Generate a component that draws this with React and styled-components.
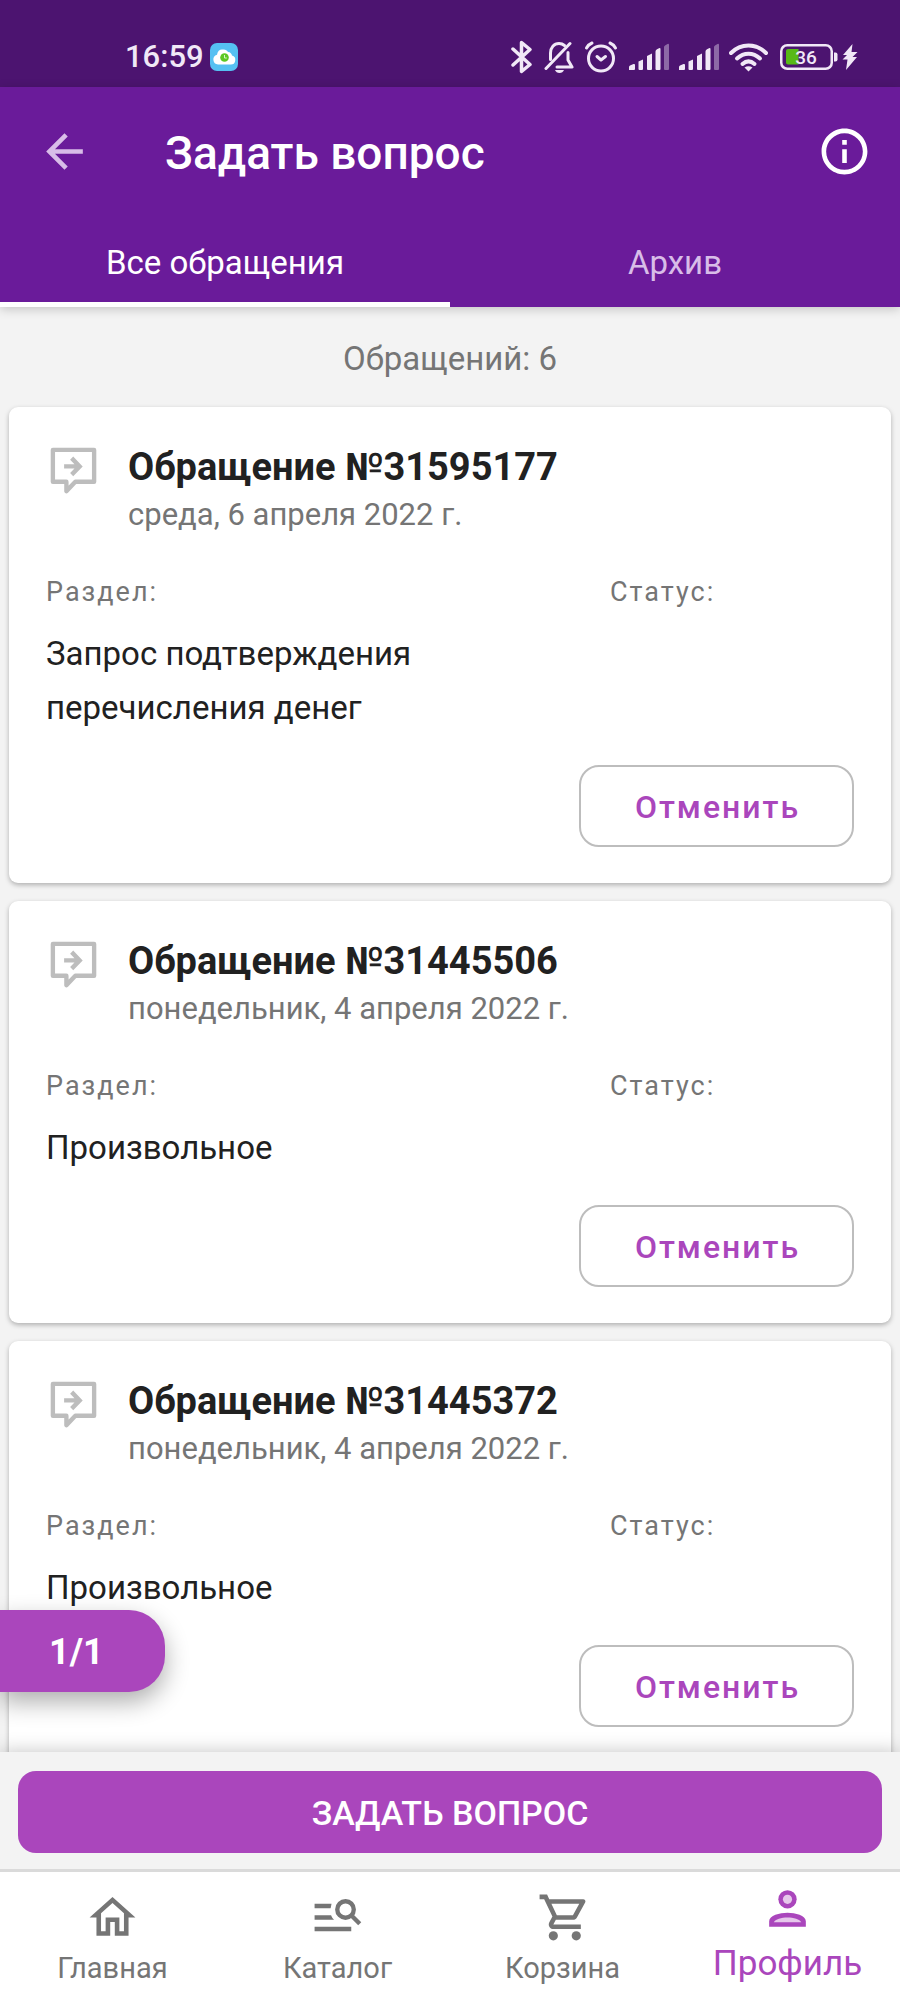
import React, { useState } from "react";
import styled, { createGlobalStyle } from "styled-components";

const GlobalStyle = createGlobalStyle`
  * {
    box-sizing: border-box;
  }
  body {
    margin: 0;
    background: #f3f3f3;
    font-family: Roboto, "Open Sans", sans-serif;
  }
  button {
    font-family: inherit;
    cursor: pointer;
  }
`;

const Screen = styled.div`
  display: flex;
  flex-direction: column;
  height: 100vh;
`;

const StatusBar = styled.div`
  display: flex;
  align-items: center;
  justify-content: space-between;
  flex-shrink: 0;
  height: 87px;
  padding: 26px 42px 0 125px;
  background: #4c1470;
  color: #f1e8f7;
`;
const Clock = styled.div`
  display: flex;
  align-items: center;
  gap: 6px;
  font-size: 31px;
  line-height: 36px;
  font-weight: 500;
`;
const StatusIcons = styled.div`
  display: flex;
  align-items: center;
  gap: 10px;
`;
const BatteryGroup = styled.div`
  display: flex;
  align-items: center;
  gap: 4px;
`;

const Header = styled.header`
  position: relative;
  z-index: 1;
  flex-shrink: 0;
  background: #6a1b9a;
  box-shadow: 0 2px 10px rgba(0, 0, 0, 0.2);
`;
const TitleRow = styled.div`
  display: flex;
  align-items: center;
  height: 128px;
  padding: 0 28px 0 37px;
`;
const IconButton = styled.button`
  display: flex;
  padding: 0;
  border: none;
  background: none;
  color: ${(props) => (props.$dim ? "#d8bde8" : "#fff")};
`;
const Title = styled.h1`
  flex: 1;
  margin: 0;
  padding: 4px 0 0 73px;
  color: #fff;
  font-size: 46px;
  line-height: 54px;
  font-weight: 500;
`;
const Tabs = styled.div`
  display: flex;
  padding-top: 8px;
`;
const Tab = styled.button`
  flex: 1;
  height: 84px;
  padding: 0;
  border: none;
  border-bottom: 5px solid ${(props) => (props.$active ? "#fff" : "transparent")};
  background: none;
  color: ${(props) => (props.$active ? "#fff" : "#d8bde8")};
  font-size: 33px;
  line-height: 44px;
`;

const Content = styled.div`
  position: relative;
  flex: 1;
  min-height: 0;
`;
const List = styled.main`
  display: flex;
  flex-direction: column;
  gap: 18px;
  height: 100%;
  padding: 0 9px 18px;
  overflow-y: auto;
  scrollbar-width: none;
`;
const Count = styled.div`
  padding: 30px 0 8px;
  color: #757575;
  font-size: 33px;
  line-height: 44px;
  text-align: center;
`;
const Card = styled.article`
  flex-shrink: 0;
  padding: 36px 37px;
  border-radius: 9px;
  background: #fff;
  box-shadow: 0 2px 5px rgba(0, 0, 0, 0.28);
`;
const CardHead = styled.div`
  display: flex;
  gap: 27px;
  color: #bdbdbd;
`;
const CardTitle = styled.h2`
  margin: 0;
  color: #212121;
  font-size: 38px;
  line-height: 48px;
  font-weight: 700;
`;
const CardDate = styled.div`
  color: #757575;
  font-size: 31px;
  line-height: 48px;
`;
const Fields = styled.dl`
  display: grid;
  grid-template-columns: 1fr 244px;
  margin: 30px 0;
`;
const Label = styled.dt`
  margin-bottom: 12px;
  color: #757575;
  font-size: 27px;
  line-height: 46px;
  letter-spacing: 2px;
`;
const Value = styled.dd`
  margin: 0;
  color: #212121;
  font-size: 33px;
  line-height: 54px;
`;
const CardActions = styled.div`
  display: flex;
  justify-content: flex-end;
`;
const CancelButton = styled.button`
  min-width: 275px;
  height: 82px;
  padding: 2px 0 0 2px;
  border: 2px solid #bdbdbd;
  border-radius: 20px;
  background: #fff;
  color: #aa46bc;
  font-size: 32px;
  line-height: 44px;
  font-weight: 500;
  letter-spacing: 2px;
`;

const Pager = styled.div`
  position: absolute;
  left: 0;
  bottom: 60px;
  padding: 15px 61px 13px 49px;
  border-radius: 0 36px 36px 0;
  background: #aa46bc;
  box-shadow: 0 10px 24px rgba(0, 0, 0, 0.32);
  color: #fff;
  font-size: 36px;
  line-height: 54px;
  font-weight: 700;
`;

const AskBar = styled.div`
  position: relative;
  flex-shrink: 0;
  padding: 19px 18px 16px;
  border-bottom: 3px solid #dadada;
  background: #f3f3f3;
  box-shadow: 0 0 18px rgba(0, 0, 0, 0.24);
`;
const AskButton = styled.button`
  width: 100%;
  height: 82px;
  padding: 2px 0 0;
  border: none;
  border-radius: 18px;
  background: #aa46bc;
  color: #fff;
  font-size: 34px;
  line-height: 44px;
  font-weight: 500;
`;

const BottomNav = styled.nav`
  position: relative;
  display: flex;
  flex-shrink: 0;
  height: 128px;
  background: #fff;
`;
const NavLink = styled.a`
  display: flex;
  flex: 1;
  flex-direction: column;
  align-items: center;
  padding-top: ${(props) => (props.$active ? "9px" : "18px")};
  color: ${(props) => (props.$active ? "#aa46bc" : "#757575")};
  font-size: ${(props) => (props.$active ? "35px" : "29px")};
  line-height: ${(props) => (props.$active ? "56px" : "46px")};
  text-decoration: none;
`;

const Icon = ({ children }) => (
  <svg width="55" height="55" viewBox="0 0 24 24" fill="currentColor" aria-hidden="true">
    {children}
  </svg>
);

const BackIcon = () => (
  <Icon>
    <path d="M20 11H7.83l5.59-5.59L12 4l-8 8 8 8 1.41-1.41L7.83 13H20v-2z" />
  </Icon>
);

const InfoIcon = () => (
  <Icon>
    <path d="M11 7h2v2h-2zm0 4h2v6h-2zm1-9C6.48 2 2 6.48 2 12s4.48 10 10 10 10-4.48 10-10S17.52 2 12 2zm0 18c-4.41 0-8-3.59-8-8s3.59-8 8-8 8 3.59 8 8-3.59 8-8 8z" />
  </Icon>
);

const MessageIcon = () => (
  <Icon>
    <g fill="none" stroke="currentColor" strokeWidth="1.9">
      <path d="M3 3h18v13.9h-8.2L8.9 21v-4.1H3z" strokeLinejoin="round" />
      <path d="M7.9 10.2h6.6M11.2 6.6l3.5 3.6-3.5 3.6" />
    </g>
  </Icon>
);

const HomeIcon = () => (
  <Icon>
    <path d="M12 5.69l5 4.5V18h-2v-6H9v6H7v-7.81l5-4.5M12 3L2 12h3v8h6v-6h2v6h6v-8h3L12 3z" />
  </Icon>
);

const CatalogIcon = () => (
  <Icon>
    <path d="M2 6h7.4l-.4 2H2zM2 11h7.2c.3.8.7 1.4 1.3 2H2zM2 16h16v2H2z" />
    <circle cx="15.5" cy="8.5" r="3.6" fill="none" stroke="currentColor" strokeWidth="1.9" />
    <path d="M18.2 11.2l3.5 3.5" stroke="currentColor" strokeWidth="1.9" />
  </Icon>
);

const CartIcon = () => (
  <Icon>
    <g transform="translate(1 0)">
      <path d="M15.55 13c.75 0 1.41-.41 1.75-1.03l3.58-6.49A.996.996 0 0 0 20.01 4H5.21l-.94-2H1v2h2l3.6 7.59-1.35 2.44C4.52 15.37 5.48 17 7 17h12v-2H7l1.1-2h7.45zM6.16 6h12.15l-2.76 5H8.53L6.16 6z" />
      <circle cx="7" cy="20" r="2" />
      <circle cx="17" cy="20" r="2" />
    </g>
  </Icon>
);

const ProfileIcon = () => (
  <Icon>
    <circle cx="12" cy="8" r="4" />
    <circle cx="12" cy="8" r="2" fill="#e6c8eb" />
    <path d="M12 13.9c-3.4 0-8 1.2-8 3.7V20h16v-2.4c0-2.5-4.6-3.7-8-3.7z" />
    <path d="M12 15.9c-2.6 0-5.4.8-6 2.1h12c-.6-1.3-3.4-2.1-6-2.1z" fill="#e6c8eb" />
  </Icon>
);

const WeatherIcon = () => (
  <svg width="28" height="28" viewBox="0 0 28 28" aria-hidden="true">
    <rect width="28" height="28" rx="7" fill="#55c0f2" />
    <path
      d="M8 21.5a5 5 0 0 1-1-9.8C7.5 8 10 6.3 12.5 6.6c2-.7 4.5.4 5.5 2.3 2.5.2 3.7 1.6 4 3.6a4.6 4.6 0 0 1-1.5 9z"
      fill="#fff"
    />
    <circle cx="14.5" cy="14.5" r="4.3" fill="#5cc823" />
    <path d="M14.5 12v3h2.3" fill="none" stroke="#d9f5c8" strokeWidth="1" />
  </svg>
);

const BluetoothIcon = () => (
  <svg width="23" height="34" viewBox="0 0 23 34" aria-hidden="true">
    <path
      d="M2 9l17 15.5-8.5 7V2.5l8.5 7L2 25"
      fill="none"
      stroke="currentColor"
      strokeWidth="3.5"
      strokeLinejoin="round"
      strokeLinecap="round"
    />
  </svg>
);

const MutedBellIcon = () => (
  <svg width="30" height="34" viewBox="0 0 30 34" aria-hidden="true">
    <g fill="none" stroke="currentColor" strokeWidth="3" strokeLinecap="round" strokeLinejoin="round">
      <path d="M2 28.5L26 3.5" />
      <path d="M6.5 19.5V13c0-5.5 3.5-9.5 8.5-9.5 2 0 4 .7 5.5 2" />
      <path d="M24 12.5V20l4 7H13" />
    </g>
    <path d="M11 30h9c-.8 2-2.4 3-4.5 3s-3.7-1-4.5-3z" fill="currentColor" />
  </svg>
);

const AlarmIcon = () => (
  <svg width="35" height="34" viewBox="0 0 35 34" aria-hidden="true">
    <g fill="none" stroke="currentColor" strokeWidth="3" strokeLinecap="round" strokeLinejoin="round">
      <circle cx="17" cy="18.5" r="12.5" />
      <path d="M2.5 8c1.2-2.3 3-4 5.5-5M31.5 8c-1.2-2.3-3-4-5.5-5" />
      <path d="M13 16.5l4 3.5 4.5-3.5" />
    </g>
  </svg>
);

const SignalIcon = () => (
  <svg width="40" height="28" viewBox="0 0 40 28" fill="currentColor" aria-hidden="true">
    <path d="M0 27v-3q0-1 1-1.5l3.5-1.5q1.5-.5 1.5 1V26q0 1-1 1zM9.5 18.5l4.5-2V26q0 1-1 1h-2.5q-1 0-1-1zM18 13l5-2.5V26q0 1-1 1h-3q-1 0-1-1zM26.5 8.5q0-1.5 1.5-2.3l2-1q1.5-.7 1.5.8v20q0 1-1 1h-3q-1 0-1-1z" />
    <path d="M35 4q0-1 1-1.5l2.5-1.5q1.5-.6 1.5 1v24q0 1-1 1h-3q-1 0-1-1z" opacity="0.4" />
  </svg>
);

const WifiIcon = () => (
  <svg width="41" height="30" viewBox="0 0 41 30" aria-hidden="true">
    <g fill="none" stroke="currentColor" strokeWidth="4" strokeLinecap="round">
      <path d="M2 11C12 1 27 1 37 11" />
      <path d="M8 16.5c7-6.5 16-6.5 23 0" />
      <path d="M13.5 22c4-3.5 8-3.5 12 0" />
    </g>
    <path d="M15.5 25.5q4-2.5 8 0L19.5 29.5z" fill="currentColor" />
  </svg>
);

const BatteryIcon = () => (
  <svg width="58" height="26" viewBox="0 0 58 26" aria-hidden="true">
    <rect x="1.25" y="1.25" width="50.5" height="23.5" rx="6" fill="none" stroke="currentColor" strokeWidth="2.5" />
    <path d="M54 8.5h1.5q2 0 2 2v5q0 2-2 2H54z" fill="currentColor" />
    <path d="M6 7q0-2 2-2h10.5v15.5H8q-2 0-2-2z" fill="#58b917" />
    <text x="26" y="20" textAnchor="middle" fontFamily="Roboto, sans-serif" fontSize="19" fontWeight="500" fill="currentColor">
      36
    </text>
  </svg>
);

const BoltIcon = () => (
  <svg width="16" height="26" viewBox="0 0 16 26" aria-hidden="true">
    <path d="M10.5 0L1 11h4l-4.5 4.5h5L4 26l11-13h-4.5L15.5 8h-6z" fill="currentColor" />
  </svg>
);

const requests = [
  {
    id: "31595177",
    date: "среда, 6 апреля 2022 г.",
    section: "Запрос подтверждения перечисления денег",
  },
  { id: "31445506", date: "понедельник, 4 апреля 2022 г.", section: "Произвольное" },
  { id: "31445372", date: "понедельник, 4 апреля 2022 г.", section: "Произвольное" },
];

const navItems = [
  { label: "Главная", href: "#home", icon: HomeIcon },
  { label: "Каталог", href: "#catalog", icon: CatalogIcon },
  { label: "Корзина", href: "#cart", icon: CartIcon },
  { label: "Профиль", href: "#profile", icon: ProfileIcon, active: true },
];

const RequestCard = ({ id, date, section }) => (
  <Card>
    <CardHead>
      <MessageIcon />
      <div>
        <CardTitle>Обращение №{id}</CardTitle>
        <CardDate>{date}</CardDate>
      </div>
    </CardHead>
    <Fields>
      <div>
        <Label>Раздел:</Label>
        <Value>{section}</Value>
      </div>
      <div>
        <Label>Статус:</Label>
        <Value />
      </div>
    </Fields>
    <CardActions>
      <CancelButton type="button">Отменить</CancelButton>
    </CardActions>
  </Card>
);

const App = () => {
  const [tab, setTab] = useState("all");
  return (
    <>
      <GlobalStyle />
      <Screen>
        <StatusBar>
          <Clock>
            16:59
            <WeatherIcon />
          </Clock>
          <StatusIcons>
            <BluetoothIcon />
            <MutedBellIcon />
            <AlarmIcon />
            <SignalIcon />
            <SignalIcon />
            <WifiIcon />
            <BatteryGroup>
              <BatteryIcon />
              <BoltIcon />
            </BatteryGroup>
          </StatusIcons>
        </StatusBar>
        <Header>
          <TitleRow>
            <IconButton type="button" aria-label="Назад" $dim>
              <BackIcon />
            </IconButton>
            <Title>Задать вопрос</Title>
            <IconButton type="button" aria-label="Информация">
              <InfoIcon />
            </IconButton>
          </TitleRow>
          <Tabs role="tablist">
            <Tab type="button" role="tab" aria-selected={tab === "all"} $active={tab === "all"} onClick={() => setTab("all")}>
              Все обращения
            </Tab>
            <Tab
              type="button"
              role="tab"
              aria-selected={tab === "archive"}
              $active={tab === "archive"}
              onClick={() => setTab("archive")}
            >
              Архив
            </Tab>
          </Tabs>
        </Header>
        <Content>
          <List>
            <Count>Обращений: 6</Count>
            {requests.map((item) => (
              <RequestCard key={item.id} {...item} />
            ))}
          </List>
          <Pager>1/1</Pager>
        </Content>
        <AskBar>
          <AskButton type="button">ЗАДАТЬ ВОПРОС</AskButton>
        </AskBar>
        <BottomNav>
          {navItems.map(({ label, href, icon: NavIcon, active }) => (
            <NavLink key={label} href={href} $active={active}>
              <NavIcon />
              {label}
            </NavLink>
          ))}
        </BottomNav>
      </Screen>
    </>
  );
};

export default App;
